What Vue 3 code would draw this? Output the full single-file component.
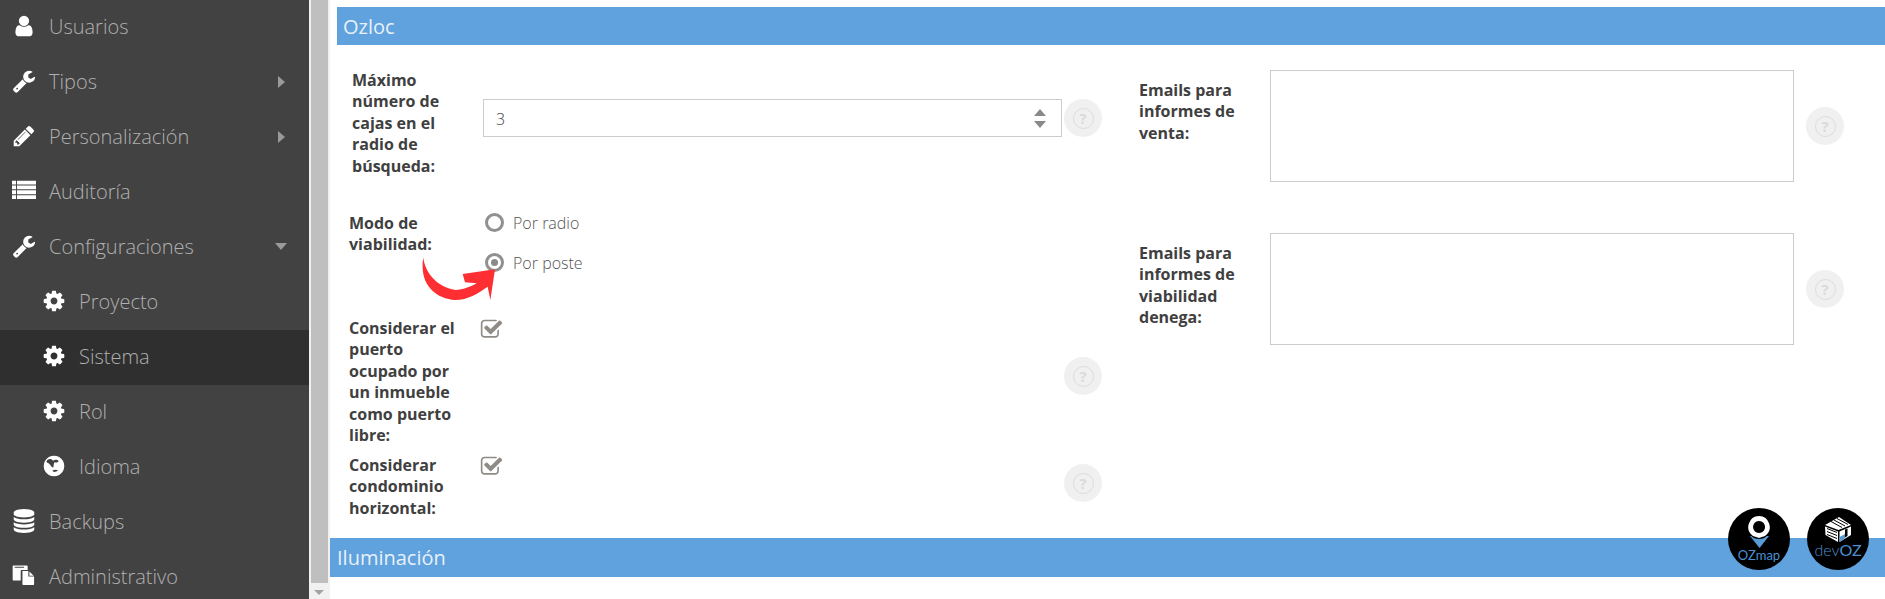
<script setup>
const P = {
  user: 'M1536 1399q0 109-62.5 187t-150.5 78h-854q-88 0-150.5-78t-62.5-187q0-85 8.5-160.5t31.5-152 58.5-131 94-89 134.5-34.5q131 128 313 128t313-128q76 0 134.5 34.5t94 89 58.5 131 31.5 152 8.5 160.5zm-256-887q0 159-112.5 271.5t-271.5 112.5-271.5-112.5-112.5-271.5 112.5-271.5 271.5-112.5 271.5 112.5 112.5 271.5z',
  wrench: 'M448 1472q0-26-19-45t-45-19-45 19-19 45 19 45 45 19 45-19 19-45zm644-420l-682 682q-37 37-90 37-52 0-91-37l-106-108q-38-36-38-90 0-53 38-91l681-681q39 98 114.5 173.5t173.5 114.5zm634-435q0 39-23 106-47 134-164.5 217.5t-258.5 83.5q-185 0-316.5-131.5t-131.5-316.5 131.5-316.5 316.5-131.5q58 0 121.5 16.5t107.5 46.5q16 11 16 28t-16 28l-293 169v224l193 107q5-3 79-48.5t135.5-81 70.5-35.5q15 0 23.5 10t8.5 25z',
  pencil: 'M491 1536l91-91-235-235-91 91v107h128v128h107zm523-928q0-22-22-22-10 0-17 7l-542 542q-7 7-7 17 0 22 22 22 10 0 17-7l542-542q7-7 7-17zm-54-192l416 416-832 832h-416v-416zm683 96q0 53-37 90l-166 166-416-416 166-165q36-38 90-38 53 0 91 38l235 234q37 39 37 91z',
  list: 'M0 127h300v285h-300zM370 127h1422v285h-1422zM0 487h300v285h-300zM370 487h1422v285h-1422zM0 847h300v285h-300zM370 847h1422v285h-1422zM0 1207h300v285h-300zM370 1207h1422v285h-1422z',
  cog: 'M1152 896q0-106-75-181t-181-75-181 75-75 181 75 181 181 75 181-75 75-181zm512-109v222q0 12-8 23t-20 13l-185 28q-19 54-39 91 35 50 107 138 10 12 10 25t-9 23q-27 37-99 108t-94 71q-12 0-26-9l-138-108q-44 23-91 38-16 136-29 186-7 28-36 28h-222q-14 0-24.5-8.5t-11.5-21.5l-28-184q-49-16-90-37l-141 107q-10 9-25 9-14 0-25-11-126-114-165-168-7-10-7-23 0-12 8-23 15-21 51-66.5t54-70.5q-27-50-41-99l-183-27q-13-2-21-12.5t-8-23.5v-222q0-12 8-23t19-13l186-28q14-46 39-92-40-57-107-138-10-12-10-24 0-10 9-23 26-36 98.5-107.5t94.5-71.5q13 0 26 10l138 107q44-23 91-38 16-136 29-186 7-28 36-28h222q14 0 24.5 8.5t11.5 21.5l28 184q49 16 90 37l142-107q9-9 24-9 13 0 25 10 129 119 165 170 7 8 7 22 0 12-8 23-15 21-51 66.5t-54 70.5q26 50 41 98l183 28q13 2 21 12.5t8 23.5z',
  globe: 'M896 128a768 768 0 1 0 .1 0zM330 600C340 420 560 340 700 400C760 440 780 520 860 480C960 380 1180 420 1240 520C1200 640 1050 660 960 620C860 640 900 800 840 1000C760 1020 700 920 620 820C560 700 420 680 330 600zM780 1240C900 1160 1100 1170 1200 1230C1120 1300 960 1360 860 1330C820 1310 790 1280 780 1240z',
  database: 'M896 768q237 0 443-43t325-127v170q0 69-103 128t-280 93.5-385 34.5-385-34.5-280-93.5-103-128v-170q119 84 325 127t443 43zm0 768q237 0 443-43t325-127v170q0 69-103 128t-280 93.5-385 34.5-385-34.5-280-93.5-103-128v-170q119 84 325 127t443 43zm0-384q237 0 443-43t325-127v170q0 69-103 128t-280 93.5-385 34.5-385-34.5-280-93.5-103-128v-170q119 84 325 127t443 43zm0-1152q208 0 385 34.5t280 93.5 103 128v128q0 69-103 128t-280 93.5-385 34.5-385-34.5-280-93.5-103-128v-128q0-69 103-128t280-93.5 385-34.5z',
  paste: 'M50 110h1060q60 0 60 60v280h-450q-70 0-70 70v720h-540q-60 0-60-60v-1010q0-60 60-60zM200 210v70h700v-70zM780 530h440v410h430v570q0 60-60 60h-750q-60 0-60-60zM1300 560l320 310h-320z'
}
const menu = [
  { label: 'Usuarios', icon: 'user' },
  { label: 'Tipos', icon: 'wrench', caret: 'right' },
  { label: 'Personalización', icon: 'pencil', caret: 'right' },
  { label: 'Auditoría', icon: 'list' },
  { label: 'Configuraciones', icon: 'wrench', caret: 'down' },
  { label: 'Proyecto', icon: 'cog', sub: true },
  { label: 'Sistema', icon: 'cog', sub: true, active: true },
  { label: 'Rol', icon: 'cog', sub: true },
  { label: 'Idioma', icon: 'globe', sub: true },
  { label: 'Backups', icon: 'database' },
  { label: 'Administrativo', icon: 'paste' }
]
const checkPath = 'M1472 930v318q0 119-84.5 203.5t-203.5 84.5h-832q-119 0-203.5-84.5t-84.5-203.5v-832q0-119 84.5-203.5t203.5-84.5h832q63 0 117 25 15 7 18 23 3 17-9 29l-49 49q-10 10-23 10-3 0-9-2-23-6-45-6h-832q-66 0-113 47t-47 113v832q0 66 47 113t113 47h832q66 0 113-47t47-113v-254q0-13 9-22l64-64q10-10 23-10 6 0 12 3 20 8 20 29zm231-489l-814 814q-24 24-57 24t-57-24l-430-430q-24-24-24-57t24-57l110-110q24-24 57-24t57 24l263 263 647-647q24-24 57-24t57 24l110 110q24 24 24 57t-24 57z'
</script>

<template>
  <div class="page">
    <aside class="sidebar">
      <div
        v-for="item in menu"
        :key="item.label"
        class="item"
        :class="{ sub: item.sub, active: item.active }"
      >
        <svg class="icon" viewBox="0 0 1792 1792"><path fill="#fff" fill-rule="evenodd" :d="P[item.icon]" /></svg>
        <span class="item-label">{{ item.label }}</span>
        <svg v-if="item.caret === 'right'" class="caret-r" viewBox="0 0 7 12"><path d="M0 0l7 6-7 6z" fill="#9a9a9a" /></svg>
        <svg v-if="item.caret === 'down'" class="caret-d" viewBox="0 0 12 7"><path d="M0 0h12l-6 7z" fill="#9a9a9a" /></svg>
      </div>
    </aside>

    <div class="scrollbar">
      <div class="thumb"></div>
      <svg class="scroll-arrow" viewBox="0 0 10 5"><path d="M0 0h10l-5 5z" fill="#a3a3a3" /></svg>
    </div>

    <main class="main">
      <h2 class="head head-ozloc">Ozloc</h2>

      <div class="form">
        <div class="col-left">
          <div class="row row-max">
            <label class="lbl">Máximo número de cajas en el radio de búsqueda:</label>
            <div class="number">
              <span class="number-val">3</span>
              <svg class="spin" viewBox="0 0 12 19"><path d="M6 0l6 7H0zM0 12h12l-6 7z" fill="#8a8a8a" /></svg>
            </div>
            <div class="help help-max"><span class="help-q">?</span></div>
          </div>

          <div class="row row-modo">
            <label class="lbl">Modo de viabilidad:</label>
            <div class="radios">
              <div class="radio-line"><span class="radio"></span><span>Por radio</span></div>
              <div class="radio-line"><span class="radio on"></span><span>Por poste</span></div>
            </div>
          </div>

          <div class="row row-puerto">
            <label class="lbl">Considerar el puerto ocupado por un inmueble como puerto libre:</label>
            <svg class="check" viewBox="0 0 1792 1792"><path fill="#8f8b86" :d="checkPath" /></svg>
            <div class="help help-puerto"><span class="help-q">?</span></div>
          </div>

          <div class="row row-condo">
            <label class="lbl">Considerar condominio horizontal:</label>
            <svg class="check" viewBox="0 0 1792 1792"><path fill="#8f8b86" :d="checkPath" /></svg>
            <div class="help help-condo"><span class="help-q">?</span></div>
          </div>
        </div>

        <div class="col-right">
          <div class="rrow">
            <label class="lbl rlbl">Emails para informes de venta:</label>
            <div class="area"></div>
            <div class="help"><span class="help-q">?</span></div>
          </div>
          <div class="rrow">
            <label class="lbl rlbl">Emails para informes de viabilidad denega:</label>
            <div class="area"></div>
            <div class="help"><span class="help-q">?</span></div>
          </div>
        </div>
      </div>

      <h2 class="head head-ilum">Iluminación</h2>
    </main>

    <svg class="arrow" viewBox="0 0 300 180">
      <path fill="#fd2f33" d="M25 22C28 62 62 112 122 120C142 120 168 110 185 100L150 97L143 72L240 58L226 150L218 110C188 130 160 150 120 150C70 148 10 110 25 22z" />
    </svg>

    <div class="badges">
      <div class="badge">
        <svg class="pin" viewBox="0 0 22 33">
          <path d="M2 20h19l-9.500 12z" fill="#5b9bd5" />
          <circle cx="11" cy="11" r="12" fill="#000" />
          <path fill="#fff" fill-rule="evenodd" d="M11 0a11 11 0 0 1 6 20l-6 2-6-2a11 11 0 0 1 6-20zM11 5a6 6 0 1 0 .1 0z" />
        </svg>
        <span class="badge-text"><b>OZ</b><span class="map">map</span></span>
      </div>
      <div class="badge">
        <svg class="cube" viewBox="0 0 26 25">
          <path fill="#fff" d="M14 0l12 8-12.500 5L0 8z" />
          <path fill="#fff" d="M0 9.500l13 5V25L.5 18z" />
          <path fill="#fff" d="M14.500 14.500l11.500-5V18l-11.500 7z" />
          <path stroke="#000" stroke-width="1" fill="none" d="M2 11.500l10 4M2 14.500l10 4M2 17.500l10 4M9 3l11 6M12 1.500l11 6M6 4.500l11 6" />
          <path fill="#000" d="M20 12.500l2.500-1V19l-2.500 1.500z" />
          <path fill="#5b9bd5" d="M14.500 20l5.500-3v4.500L14.500 25z" />
        </svg>
        <span class="badge-text dev">dev<b>OZ</b></span>
      </div>
    </div>
  </div>
</template>

<style>
html, body { margin: 0; padding: 0; overflow: hidden; background: #fff; }
</style>

<style scoped>
.page {
  position: relative;
  display: flex;
  width: 1885px;
  height: 599px;
  overflow: hidden;
  background: #fff;
  font-family: "Open Sans", sans-serif;
}
.sidebar {
  width: 309px;
  flex: none;
  background: #424242;
}
.item {
  display: flex;
  align-items: center;
  height: 55px;
  padding-left: 12px;
  color: #b0b0b0;
  font-size: 20px;
  font-weight: 300;
}
.item.sub { padding-left: 42px; }
.item.active { background: #2f2f2f; }
.icon {
  width: 24px;
  height: 24px;
  flex: none;
  margin-right: 13px;
  margin-top: -3px;
}
.item-label { flex: 1; margin-top: -2px; }
.caret-r { width: 7px; height: 12px; margin-right: 24px; margin-top: -2px; }
.caret-d { width: 12px; height: 7px; margin-right: 22px; margin-top: -2px; }
.scrollbar {
  width: 21px;
  flex: none;
  background: #f1f1f1;
  padding: 0 2px;
  box-sizing: border-box;
  position: relative;
}
.thumb { width: 17px; height: 583px; background: #bfbfbf; }
.scroll-arrow {
  display: block;
  width: 10px;
  height: 5px;
  margin: 7px 0 0 3px;
}
.main {
  flex: 1;
  min-width: 0;
  padding-top: 7px;
}
.head {
  margin: 0;
  background: #5fa2dd;
  color: #e8f0f9;
  font-size: 20px;
  font-weight: 400;
  padding-left: 7px;
}
.head-ozloc { margin-left: 7px; height: 38px; line-height: 40px; padding-left: 6px; }
.head-ilum { height: 39px; line-height: 39px; }
.form {
  display: flex;
  height: 493px;
  box-sizing: border-box;
  padding-top: 25px;
}
.col-left { width: 808px; flex: none; }
.row {
  display: grid;
  grid-template-columns: 134px 581px 38px;
  padding-left: 19px;
  align-items: start;
}
.lbl {
  font-size: 16px;
  font-weight: 700;
  line-height: 21.43px;
  color: #404040;
}
.row-max {
  grid-template-columns: 131px 579px 38px;
  padding-left: 22px;
  height: 143px;
}
.row-max .lbl { width: 105px; }
.row-modo { height: 105px; }
.row-modo .lbl { width: 100px; }
.row-puerto { height: 137px; }
.row-puerto .lbl { width: 110px; }
.row-condo .lbl { width: 110px; }
.number {
  display: flex;
  align-items: center;
  justify-content: space-between;
  box-sizing: border-box;
  width: 579px;
  height: 38px;
  margin-top: 29px;
  padding: 0 15px 0 12px;
  border: 1px solid #ccc;
  font-size: 16px;
  font-weight: 300;
  color: #444;
}
.number-val { margin-top: 2px; }
.spin { width: 12px; height: 19px; }
.help {
  display: flex;
  align-items: center;
  justify-content: center;
  width: 38px;
  height: 38px;
  border-radius: 50%;
  background: #f0f0f0;
}
.help-max { margin: 29px 0 0 2px; }
.help-puerto { margin-top: 39px; grid-column: 3; }
.help-condo { margin-top: 9px; grid-column: 3; }
.help-q {
  display: block;
  box-sizing: border-box;
  width: 21px;
  height: 21px;
  border: 1.5px solid #dcdcdc;
  border-radius: 50%;
  color: #dadada;
  font-size: 15px;
  font-weight: 700;
  line-height: 18px;
  text-align: center;
}
.radios { display: flex; flex-direction: column; gap: 19px; margin-top: -1px; }
.radio-line {
  display: flex;
  align-items: center;
  gap: 8px;
  height: 21px;
  padding-left: 2px;
  font-size: 16px;
  font-weight: 300;
  color: #555;
}
.radio {
  box-sizing: border-box;
  width: 19px;
  height: 19px;
  border: 3px solid #909090;
  border-radius: 50%;
  background: #fff;
  position: relative;
  margin-right: 1px;
}
.radio.on::after {
  content: "";
  position: absolute;
  left: 3px;
  top: 3px;
  width: 7px;
  height: 7px;
  border-radius: 50%;
  background: #8a8a8a;
}
.check {
  width: 23px;
  height: 23px;
  margin-left: -3px;
}
.col-right { flex: 1; }
.rrow {
  display: grid;
  grid-template-columns: 131px 524px 38px;
  align-items: center;
  padding-left: 1px;
  margin-bottom: 51px;
}
.rlbl { align-self: start; margin-top: 10px; width: 100px; }
.area {
  box-sizing: border-box;
  width: 524px;
  height: 112px;
  border: 1px solid #ccc;
}
.rrow .help { margin-left: 12px; }
.arrow {
  position: absolute;
  left: 415px;
  top: 250px;
  width: 100px;
  height: 60px;
}
.badges {
  position: absolute;
  left: 1728px;
  top: 508px;
  display: flex;
  gap: 17px;
}
.badge {
  position: relative;
  width: 62px;
  height: 62px;
  border-radius: 50%;
  background: #000;
  display: flex;
  flex-direction: column;
  align-items: center;
}
.pin { width: 22px; height: 33px; margin-top: 8px; }
.cube { width: 26px; height: 25px; margin-top: 9px; }
.badge-text {
  color: #4a90d0;
  font-family: Lato, sans-serif;
  font-size: 13px;
  line-height: 14px;
  font-weight: 300;
  margin-top: -1px;
  white-space: nowrap;
}
.map { font-weight: 400; }
.badge-text.dev { font-size: 16px; line-height: 17px; margin-top: -1px; }
</style>
